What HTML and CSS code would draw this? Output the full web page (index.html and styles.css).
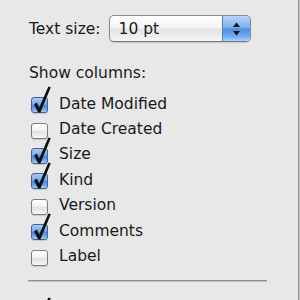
FILE: index.html
```html
<!DOCTYPE html>
<html>
<head>
<meta charset="utf-8">
<link rel="stylesheet" href="styles.css">
</head>
<body>
<div class="panel">
  <div class="size-row">
    <span class="label">Text size:</span>
    <div class="popup">
      <span class="popup-value">10 pt</span>
      <span class="popup-arrows">
        <svg width="27" height="25" viewBox="0 0 27 25"><path d="M13.5 6.5 L17 11 L10 11 Z M10 15 L17 15 L13.5 19.5 Z" fill="#111"/></svg>
      </span>
    </div>
  </div>
  <div class="heading">Show columns:</div>
  <ul class="columns">
    <li class="item"><span class="box on"></span><span>Date Modified</span></li>
    <li class="item"><span class="box"></span><span>Date Created</span></li>
    <li class="item"><span class="box on"></span><span>Size</span></li>
    <li class="item"><span class="box on"></span><span>Kind</span></li>
    <li class="item"><span class="box"></span><span>Version</span></li>
    <li class="item"><span class="box on"></span><span>Comments</span></li>
    <li class="item"><span class="box"></span><span>Label</span></li>
  </ul>
  <div class="separator"></div>
  <div class="item more"><span class="box on"></span></div>
</div>
</body>
</html>
```
FILE: styles.css
```css
html, body {
  margin: 0;
  padding: 0;
  background: #e8e8e8;
}
body {
  width: 300px;
  height: 300px;
  overflow: hidden;
  font-family: "DejaVu Sans", Verdana, sans-serif;
  font-size: 15.5px;
  color: #1a1a1a;
}
.panel {
  box-sizing: border-box;
  width: 299px;
  height: 300px;
  overflow: hidden;
  padding: 15px 0 0 29px;
  border-right: 1px solid #989898;
  box-shadow: 1px 0 0 #c4c4c4;
}
.size-row {
  display: flex;
  align-items: center;
  gap: 8px;
  height: 27px;
}
.label {
  line-height: 18px;
}
.popup {
  box-sizing: border-box;
  width: 142px;
  height: 27px;
  display: flex;
  align-items: center;
  border: 1px solid #8a8a8a;
  border-bottom-color: #7a7a7a;
  border-radius: 5px;
  overflow: hidden;
  background: linear-gradient(#ffffff 0%, #f4f4f4 45%, #e4e4e4 55%, #f6f6f6 100%);
  box-shadow: 0 1px 1px rgba(0,0,0,0.15);
}
.popup-value {
  flex: 1;
  padding-left: 9px;
  line-height: 18px;
}
.popup-arrows {
  width: 27px;
  height: 25px;
  display: flex;
  border-left: 1px solid #5a7fb8;
  background: linear-gradient(#b5d4f8 0%, #7fb0ee 45%, #4f8fe4 52%, #6fa9f0 80%, #a8d2fa 100%);
}
.heading {
  margin-top: 22px;
  line-height: 18px;
}
.columns {
  list-style: none;
  margin: 9px 0 0 0;
  padding: 0;
}
.item {
  display: flex;
  align-items: center;
  height: 25.4px;
  line-height: 18px;
}
.box {
  position: relative;
  box-sizing: border-box;
  flex: none;
  width: 17px;
  height: 16px;
  margin: 3px 11px 0 2px;
  border: 1px solid #7c7c7c;
  border-radius: 3px;
  background: linear-gradient(#ffffff 0%, #f2f2f2 45%, #e0e0e0 55%, #f8f8f8 100%);
  box-shadow: 0 1px 1px rgba(0,0,0,0.15);
}
.box.on {
  border-color: #45628c;
  background: linear-gradient(#a9cbf4 0%, #77aaec 45%, #4a8ae2 52%, #6aa6ef 80%, #a6d0fa 100%);
}
.box.on::after {
  content: "";
  position: absolute;
  left: -2px;
  top: -13px;
  width: 22px;
  height: 30px;
  background: url("data:image/svg+xml;utf8,<svg xmlns='http://www.w3.org/2000/svg' viewBox='0 0 22 30' width='22' height='30'><path d='M4 19.5 L6.8 17.6 L9.2 22.4 L18.4 1.6 L20.8 2.2 L10.4 27.6 L8.2 27.6 Z' fill='%23111'/></svg>") no-repeat;
}
.separator {
  box-sizing: border-box;
  width: 239px;
  height: 2px;
  margin: 11px 0 0 -1px;
  border-top: 1px solid #8e8e8e;
  border-bottom: 1px solid #c2c2c2;
}
.more {
  margin-top: 20px;
}
```
